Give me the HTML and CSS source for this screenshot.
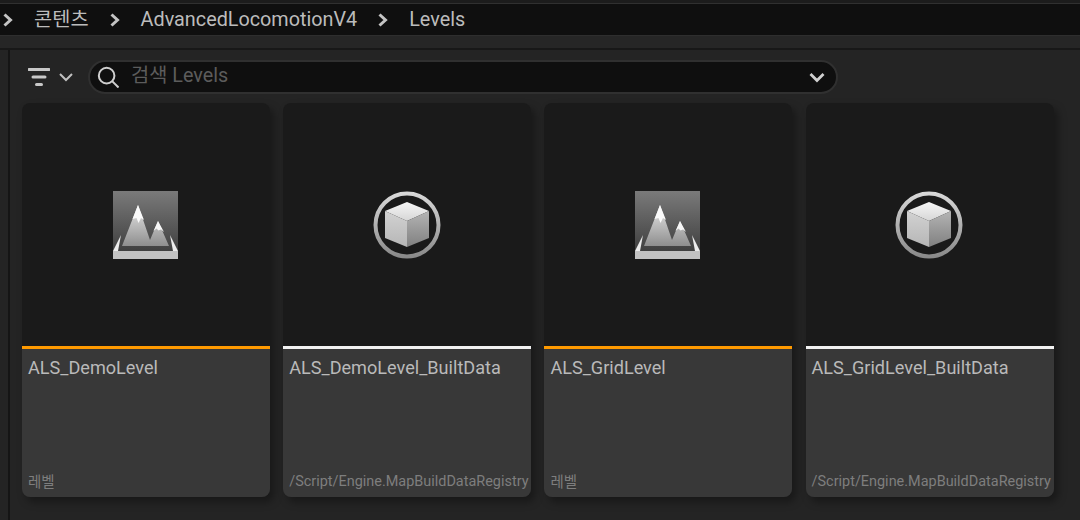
FILE: index.html
```html
<!DOCTYPE html>
<html lang="ko">
<head>
  <meta charset="UTF-8" />
  <title>Levels</title>
  <link rel="stylesheet" href="styles.css">
</head>
<body>

<!-- breadcrumb -->
<div class="top-edge"></div>
<div class="crumbs">
  <svg class="crumb-arrow first" viewBox="0 0 10 14"><path d="M1.500 1.500L7.500 7l-6 5.500"/></svg>
  <span>콘텐츠</span>
  <svg class="crumb-arrow" viewBox="0 0 10 14"><path d="M1.500 1.500L7.500 7l-6 5.500"/></svg>
  <span>AdvancedLocomotionV4</span>
  <svg class="crumb-arrow" viewBox="0 0 10 14"><path d="M1.500 1.500L7.500 7l-6 5.500"/></svg>
  <span>Levels</span>
</div>
<div class="strip"></div>

<div class="panel">
  <div class="side-line"></div>
  <div class="content">
    <div class="toolbar">
      <svg class="filter-icon" viewBox="0 0 22 18"><path d="M1 1.500h20M5 9h12M8.500 16.500h5"/></svg>
      <svg class="filter-arrow" viewBox="0 0 14 9"><path d="M1 1l6 6 6-6"/></svg>
      <div class="search">
        <svg class="search-icon" viewBox="0 0 24 24"><circle cx="10.500" cy="10.500" r="8.500"/><path d="M16.500 16.500l7 7"/></svg>
        <span class="search-text">검색 Levels</span>
        <svg class="search-arrow" viewBox="0 0 16 11"><path d="M1.500 2l6.500 6.500L14.500 2"/></svg>
      </div>
    </div>

    <div class="grid">
      <div class="card">
        <div class="thumb">
          <svg class="level-icon" viewBox="0 0 65 68"><use href="#level"/></svg>
        </div>
        <div class="bar orange"></div>
        <div class="info">
          <div class="name">ALS_DemoLevel</div>
          <div class="type korean">레벨</div>
        </div>
      </div>
      <div class="card">
        <div class="thumb">
          <svg class="data-icon" viewBox="0 0 68 68"><use href="#cube"/></svg>
        </div>
        <div class="bar white"></div>
        <div class="info">
          <div class="name">ALS_DemoLevel_BuiltData</div>
          <div class="type">/Script/Engine.MapBuildDataRegistry</div>
        </div>
      </div>
      <div class="card">
        <div class="thumb">
          <svg class="level-icon" viewBox="0 0 65 68"><use href="#level"/></svg>
        </div>
        <div class="bar orange"></div>
        <div class="info">
          <div class="name">ALS_GridLevel</div>
          <div class="type korean">레벨</div>
        </div>
      </div>
      <div class="card">
        <div class="thumb">
          <svg class="data-icon" viewBox="0 0 68 68"><use href="#cube"/></svg>
        </div>
        <div class="bar white"></div>
        <div class="info">
          <div class="name">ALS_GridLevel_BuiltData</div>
          <div class="type">/Script/Engine.MapBuildDataRegistry</div>
        </div>
      </div>
    </div>
  </div>
</div>

<!-- shared icons -->
<svg class="defs" width="0" height="0">
  <defs>
    <linearGradient id="lvBg" x1="0" y1="0" x2="0" y2="1">
      <stop offset="0" stop-color="#7a7a7a"/>
      <stop offset="1" stop-color="#404040"/>
    </linearGradient>
    <linearGradient id="lvMount" x1="0" y1="0" x2="0" y2="1">
      <stop offset="0" stop-color="#e8e8e8"/>
      <stop offset="1" stop-color="#8e8e8e"/>
    </linearGradient>
    <linearGradient id="ringG" x1="0" y1="0" x2="0" y2="1">
      <stop offset="0" stop-color="#d8d8d8"/>
      <stop offset="1" stop-color="#8a8a8a"/>
    </linearGradient>
    <linearGradient id="cubeTop" x1="0" y1="0" x2="0" y2="1">
      <stop offset="0" stop-color="#f6f6f6"/>
      <stop offset="1" stop-color="#d6d6d6"/>
    </linearGradient>
    <linearGradient id="cubeRight" x1="0" y1="0" x2="0" y2="1">
      <stop offset="0" stop-color="#b4b4b4"/>
      <stop offset="1" stop-color="#808080"/>
    </linearGradient>
    <linearGradient id="cubeLeft" x1="0" y1="0" x2="0" y2="1">
      <stop offset="0" stop-color="#d2d2d2"/>
      <stop offset="1" stop-color="#b6b6b6"/>
    </linearGradient>
    <symbol id="level" viewBox="0 0 65 68">
      <rect width="65" height="60" fill="url(#lvBg)"/>
      <path d="M9 55L25 14l12 35 8-19 11 25z" fill="url(#lvMount)"/>
      <path d="M19.500 28L25 14l6 15-3-2-2.500 5-2-5z" fill="#fafafa"/>
      <path d="M40.500 40L45 30l6 11-3-2.500-2.500 1-2-2z" fill="#f6f6f6"/>
      <path d="M0 60l8-16-3 16z" fill="#ececec"/>
      <path d="M65 60l-8-16 3 16z" fill="#ececec"/>
      <rect y="60" width="65" height="8" fill="#c2c2c2"/>
    </symbol>
    <symbol id="cube" viewBox="0 0 68 68">
      <circle cx="34" cy="34" r="31.500" fill="none" stroke="url(#ringG)" stroke-width="4"/>
      <path d="M34 11l22 9-22 10-22-10z" fill="url(#cubeTop)"/>
      <path d="M12 20l22 10v26l-22-9z" fill="url(#cubeLeft)"/>
      <path d="M56 20L34 30v26l22-9z" fill="url(#cubeRight)"/>
    </symbol>
  </defs>
</svg>

</body>
</html>
```

FILE: styles.css
```css
html, body {
  margin: 0;
  height: 100%;
  overflow: hidden;
}
body {
  width: 1080px;
  height: 520px;
  background: #242424;
  font-family: Roboto, "Noto Sans CJK KR", sans-serif;
  display: flex;
  flex-direction: column;
}
.defs {
  position: absolute;
}
.top-edge {
  height: 3px;
  background: #1c1c1c;
  border-bottom: 1px solid #303030;
  flex: none;
}
.crumbs {
  height: 31px;
  background: #0f0f0f;
  border-bottom: 1px solid #2e2e2e;
  display: flex;
  align-items: center;
  color: #bcbcbc;
  font-size: 19.800px;
  line-height: 24px;
  padding-left: 3px;
  flex: none;
}
.crumb-arrow {
  width: 10px;
  height: 14px;
  margin: 0 21px;
  fill: none;
  stroke: #c4c4c4;
  stroke-width: 3;
}
.crumb-arrow.first {
  margin: 0 21px 0 0;
}
.strip {
  height: 12px;
  background: #262626;
  border-bottom: 2px solid #181818;
  flex: none;
}
.panel {
  flex: 1;
  display: flex;
  min-height: 0;
}
.side-line {
  width: 2px;
  margin-left: 8px;
  background: #151515;
  flex: none;
}
.content {
  flex: 1;
  padding: 10px 27px 0 12px;
}
.toolbar {
  height: 34px;
  display: flex;
  align-items: center;
  padding-left: 6px;
  margin-bottom: 9px;
}
.filter-icon {
  width: 22px;
  height: 18px;
  fill: none;
  stroke: #c8c8c8;
  stroke-width: 3;
  stroke-linecap: round;
}
.filter-arrow {
  width: 14px;
  height: 9px;
  margin-left: 9px;
  fill: none;
  stroke: #c0c0c0;
  stroke-width: 2;
}
.search {
  width: 728px;
  height: 30px;
  margin-left: 15px;
  background: #0f0f0f;
  border: 2px solid #303030;
  border-radius: 17px;
  display: flex;
  align-items: center;
  padding: 0 11px 0 7px;
}
.search-icon {
  width: 22px;
  height: 22px;
  fill: none;
  stroke: #cfcfcf;
  stroke-width: 2.200;
}
.search-text {
  flex: 1;
  margin-left: 12px;
  color: #5c5c5c;
  font-size: 19.800px;
  line-height: 24px;
  position: relative;
  top: -1px;
}
.search-arrow {
  width: 16px;
  height: 11px;
  fill: none;
  stroke: #d0d0d0;
  stroke-width: 2.800;
}
.grid {
  display: grid;
  grid-template-columns: repeat(4, 248px);
  column-gap: 13.200px;
}
.card {
  height: 394px;
  border-radius: 8px;
  overflow: hidden;
  display: flex;
  flex-direction: column;
  box-shadow: 4px 5px 8px rgba(0, 0, 0, 0.35);
}
.thumb {
  height: 243px;
  background: #1a1a1a;
  display: flex;
  align-items: center;
  justify-content: center;
  flex: none;
}
.level-icon {
  width: 65px;
  height: 68px;
  margin-left: -1px;
}
.data-icon {
  width: 68px;
  height: 68px;
  margin-left: -1px;
}
.bar {
  height: 3px;
  flex: none;
}
.bar.orange {
  background: #ff9a00;
}
.bar.white {
  background: #f2f2f2;
}
.info {
  flex: 1;
  background: #383838;
  padding: 7px 0 5px 6px;
  display: flex;
  flex-direction: column;
  justify-content: space-between;
}
.name {
  color: #bababa;
  font-size: 18.100px;
  line-height: 24px;
}
.type {
  color: #7e7e7e;
  font-size: 14.450px;
  line-height: 20px;
  white-space: nowrap;
}
.type.korean {
  margin-bottom: -1px;
}
```
